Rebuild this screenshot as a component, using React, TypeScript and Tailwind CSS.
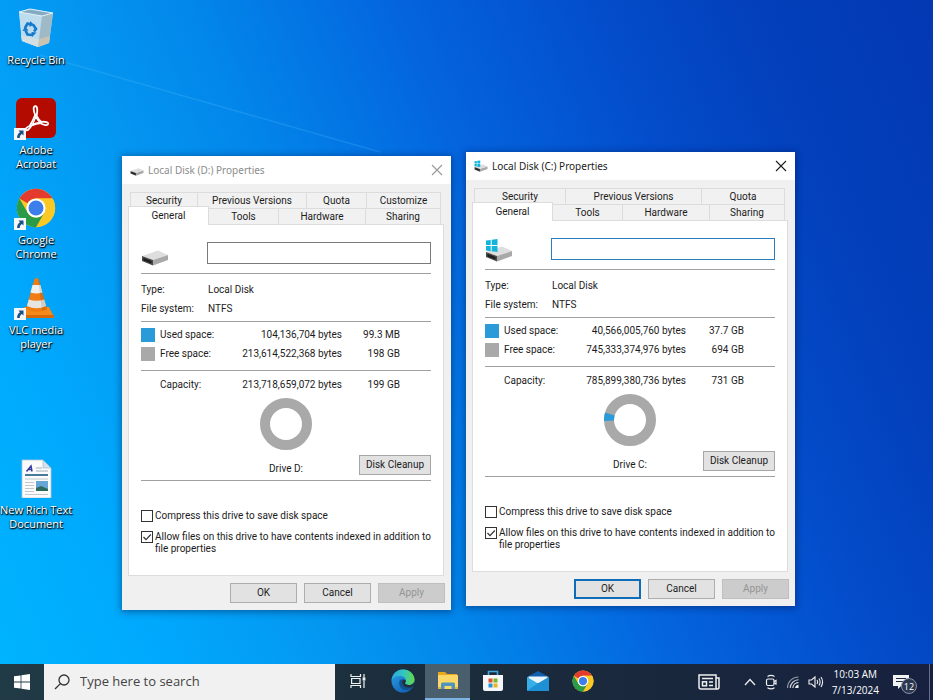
import { useState, type ReactNode } from 'react';

type Tab = { name: string; width: string };

type Drive = {
    letter: string;
    used: string;
    usedShort: string;
    free: string;
    freeShort: string;
    capacity: string;
    capacityShort: string;
    ratio: number;
    backTabs: Tab[];
    active: boolean;
};

const drives: Drive[] = [
    {
        letter: 'D',
        used: '104,136,704 bytes',
        usedShort: '99.3 MB',
        free: '213,614,522,368 bytes',
        freeShort: '198 GB',
        capacity: '213,718,659,072 bytes',
        capacityShort: '199 GB',
        ratio: 0,
        backTabs: [
            { name: 'Security', width: 'w-[67px]' },
            { name: 'Previous Versions', width: 'w-[109px]' },
            { name: 'Quota', width: 'w-[60px]' },
            { name: 'Customize', width: 'flex-1' },
        ],
        active: false,
    },
    {
        letter: 'C',
        used: '40,566,005,760 bytes',
        usedShort: '37.7 GB',
        free: '745,333,374,976 bytes',
        freeShort: '694 GB',
        capacity: '785,899,380,736 bytes',
        capacityShort: '731 GB',
        ratio: 0.052,
        backTabs: [
            { name: 'Security', width: 'w-[91px]' },
            { name: 'Previous Versions', width: 'w-[136px]' },
            { name: 'Quota', width: 'flex-1' },
        ],
        active: true,
    },
];

const frontTabs: Tab[] = [
    { name: 'Tools', width: 'w-[70px]' },
    { name: 'Hardware', width: 'w-[87px]' },
    { name: 'Sharing', width: 'flex-1' },
];

/* ---------- icons ---------- */

function ChromeIcon({ className }: { className?: string }) {
    return (
        <svg viewBox="0 0 48 48" className={className} aria-hidden="true">
            <circle cx="24" cy="24" r="23" fill="#fbc926" />
            <path d="M4.1 12.5A23 23 0 0 1 43.9 12.5H24A11.5 11.5 0 0 0 14 18.3Z" fill="#e33b2e" />
            <path d="M43.9 12.5H24L34 29.8 24 47A23 23 0 0 0 43.9 12.5Z" fill="#fbc926" />
            <path d="M4.1 12.5 14 29.8A11.5 11.5 0 0 0 34 29.8L24 47A23 23 0 0 1 4.1 12.5Z" fill="#2a9c48" />
            <circle cx="24" cy="24" r="11.5" fill="#fff" />
            <circle cx="24" cy="24" r="9" fill="#3c7fea" />
        </svg>
    );
}

function RecycleBinIcon() {
    return (
        <svg viewBox="0 0 40 40" className="size-10" aria-hidden="true">
            <path d="M3 4 14 1 37 5 33 35 22 39 6 33Z" fill="#b9d8ea" />
            <path d="M3 4 26 8 22 39 6 33Z" fill="#bddcee" />
            <path d="M26 8 37 5 33 35 22 39Z" fill="#9fb9c6" />
            <path d="M5 27 23 32 22 39 6 33Z" fill="#d3dfe2" />
            <path d="M23 31 34 28 33 35 22 39Z" fill="#c9c3b4" />
            <path d="M3 4 14 1 37 5 26 8Z" fill="#84abc2" stroke="#e4f1f8" strokeWidth="1" />
            <g fill="none" stroke="#1379cd" strokeWidth="2.6">
                <path d="M9 20 11.5 15.5 15 16.5" />
                <path d="M17 16.5 20 21 18 23.5" />
                <path d="M17 27 11.5 26.5 9.5 22.5" />
            </g>
            <path d="M14 13 18 16.5 13.5 19ZM20.5 24.5 16 29 15.5 24ZM6.5 23 9 18.5 12.5 22.5Z" fill="#1379cd" />
        </svg>
    );
}

function AcrobatIcon() {
    return (
        <svg viewBox="0 0 40 40" className="size-10" aria-hidden="true">
            <rect width="40" height="40" rx="6" fill="#b30b00" />
            <path
                d="M19.4 8.2c-2.6 0-2 4.6-.2 8.6-1.5 4.2-3.6 8.3-5.6 11.2-2.6 1-4.4 2.6-3.8 3.9.9 1.6 3.6-.5 5.9-4.5 3-1.1 6.1-1.9 8.9-2.2 3.5 2.1 7 2.5 7.5.9.5-1.8-2.7-2.7-6.7-2.2-2-1.4-3.6-3.5-4.8-6.3.9-3.6 1.2-9.4-1.2-9.4Z"
                fill="none"
                stroke="#fff"
                strokeWidth="1.8"
                strokeLinejoin="round"
            />
            <path d="M19.7 18.5c1 2.4 2.4 4.4 4.2 5.9-2.5.4-4.9 1-7.3 1.9 1.2-2.4 2.2-5 3.1-7.8Z" fill="#b30b00" stroke="#fff" strokeWidth="1.3" />
        </svg>
    );
}

function VlcIcon() {
    return (
        <svg viewBox="0 0 40 40" className="size-10" aria-hidden="true">
            <path d="M8 29H33L38 39Q38 40 37 40H4Q2 40 3 38Z" fill="#f38a1b" />
            <path d="M2 37H38V39L37 40H4L2 39Z" fill="#d7690a" />
            <path d="M18.5 1Q20.5-1 22.5 1L31 31Q21 37 10 31Z" fill="#f07c13" />
            <path d="M16.5 7H24.4L26.4 14.5Q20.5 16.5 14.5 14.5Z" fill="#efefed" />
            <path d="M12.8 21.5Q20.5 24 28.2 21.5L30.2 28Q20.5 32.5 10.9 28Z" fill="#e6e5e2" />
            <path d="M22 1 26 33Q29 32.5 31 31L22.5 1Z" fill="#000" opacity=".1" />
        </svg>
    );
}

function RichTextIcon() {
    return (
        <svg viewBox="0 0 40 40" className="size-10" aria-hidden="true">
            <path d="M6 2H27L35 10V40H6Z" fill="#fbfbfb" stroke="#b9c6cf" strokeWidth=".8" />
            <path d="M27 2V10H35Z" fill="#d3e2ec" stroke="#9fb4c2" strokeWidth=".6" />
            <path d="M10.5 13.5 15 8 16 13.5M12.5 11.5H16" fill="none" stroke="#383a9c" strokeWidth="1.5" />
            <path d="M20 10H26M20 13H32" stroke="#9fb1bf" />
            <path d="M9 17H32" stroke="#1c5b86" strokeWidth="1.6" />
            <path d="M9 21H32M9 24.5H18M9 27.5H18M9 30.5H18M9 33.5H18M9 36.5H32" stroke="#c3c8cc" />
            <rect x="20" y="23" width="12" height="10" fill="#65a6d6" />
            <path d="M20 30 25 28 32 31V33H20Z" fill="#2e6a5c" />
        </svg>
    );
}

function ShortcutArrow() {
    return (
        <svg viewBox="0 0 12 12" className="absolute -bottom-0.5 -left-0.5 size-3" aria-hidden="true">
            <rect width="12" height="12" fill="#f4f8fb" />
            <path d="M4.5 2.5H9.5V7.5L7.9 6C6.4 7 5.6 8.3 5.8 10H3.2C2.9 7.5 4 5.5 6 4.2Z" fill="#1d4e86" />
        </svg>
    );
}

function DiskIcon({ system, className }: { system: boolean; className?: string }) {
    return (
        <svg viewBox="0 0 28 24" className={className} aria-hidden="true">
            <path d="M1 14 17 8.5 27 13 12 18Z" fill="#dedede" />
            <path d="M12 18 27 13V18L12 23.5Z" fill="#a9a9a9" />
            <path d="M1 14 12 18V23.5L1 19Z" fill="#4a4a4a" />
            <path d="M2.5 16 10.5 19V21.5L2.5 18.5Z" fill="#1e1e1e" />
            {system && (
                <path
                    d="M1 2.5 5.7 1.9V7H1ZM6.7 1.7 12.5 1V7H6.7ZM1 8H5.7V13.2L1 12.6ZM6.7 8H12.5V14L6.7 13.3Z"
                    fill="#12b4dc"
                />
            )}
        </svg>
    );
}

function WindowsLogo() {
    return (
        <svg viewBox="0 0 16 16" className="size-4" fill="#fff" aria-hidden="true">
            <path d="M0 2.3 6.6 1.4V7.6H0ZM7.4 1.2 16 0V7.6H7.4ZM0 8.4H6.6V14.6L0 13.7ZM7.4 8.4H16V16L7.4 14.8Z" />
        </svg>
    );
}

function TaskViewIcon() {
    return (
        <svg viewBox="0 0 16 16" className="size-4" fill="none" stroke="#f2f2f2" strokeWidth="1.2" aria-hidden="true">
            <path d="M1 1V3.5H10.5V1M1 15V12.5H10.5V15M1.6 5.5H10V10.5H1.6ZM14 1V4.5M14 8V15" />
            <rect x="13.2" y="5" width="1.6" height="2" fill="#f2f2f2" />
        </svg>
    );
}

function EdgeIcon() {
    return (
        <svg viewBox="0 0 24 24" className="size-6" aria-hidden="true">
            <defs>
                <linearGradient id="edge-top" x1="0" y1="0.4" x2="1" y2="0.5">
                    <stop offset="0" stopColor="#2aa8e0" />
                    <stop offset="0.5" stopColor="#32c6c0" />
                    <stop offset="1" stopColor="#63d84c" />
                </linearGradient>
                <linearGradient id="edge-low" x1="0" y1="0" x2="0.6" y2="1">
                    <stop offset="0" stopColor="#2aa4ea" />
                    <stop offset="1" stopColor="#1464b8" />
                </linearGradient>
            </defs>
            <circle cx="12" cy="12" r="11.5" fill="url(#edge-low)" />
            <path d="M.6 11.5C1.2 5 6 .5 12 .5c6.5 0 11.5 4.7 11.5 10 0 3.3-2.5 5.5-5.7 5.5-2.3 0-3.8-.9-3.8-1.9 0-.7.9-1 .9-2.6 0-2.2-2.2-4.5-5.6-4.5C5 7 1.5 8.9.6 11.5Z" fill="url(#edge-top)" />
            <path d="M8.9 11.2c-2 3.5.4 9.6 6.1 9.8 2.6.1 5-.8 6.4-2l.7-.6c.3-.3.1-.7-.3-.5-1 .5-2.4.8-3.7.8-4 0-7-2.6-7-5.3 0-1.3.7-2.3 1.8-2.9-1.7-.7-3.2-.3-4 .7Z" fill="#12508f" />
            <path d="M14 14.1c0 1 1.5 1.9 3.8 1.9 2.3 0 4-1 5-2.6.4 1.6-.1 3.5-1 4.6-1 .5-2.4.8-3.7.8-4 0-7-2.6-7-5.3 0-1.3.7-2.4 1.8-2.9 1.3.2 2 1 2 1.6 0 1.1-.9 1.2-.9 1.9Z" fill="#1e303e" />
        </svg>
    );
}

function ExplorerIcon() {
    return (
        <svg viewBox="0 0 22 20" className="h-5 w-[22px]" aria-hidden="true">
            <path d="M1 1H8L10 3H20V6H1Z" fill="#e9a81c" />
            <rect x="1" y="4" width="20" height="14" rx=".5" fill="#fbd768" />
            <path d="M4 18V13Q4 11.5 5.5 11.5H16.5Q18 11.5 18 13V18H14.5V15H7.5V18Z" fill="#4f94bb" />
            <path d="M1 16H4V18H1ZM18 16H21V18H18Z" fill="#e3b743" />
        </svg>
    );
}

function StoreIcon() {
    return (
        <svg viewBox="0 0 22 22" className="size-[22px]" aria-hidden="true">
            <path d="M6.5 6V1.5H15.5V6" fill="none" stroke="#41a5e0" strokeWidth="1.6" />
            <path d="M1 5H21V19Q21 21 19 21H3Q1 21 1 19Z" fill="#f5f6f7" />
            <rect x="6.5" y="8.5" width="4" height="4" fill="#e2502b" />
            <rect x="11.5" y="8.5" width="4" height="4" fill="#74b62c" />
            <rect x="6.5" y="13.5" width="4" height="4" fill="#2494d8" />
            <rect x="11.5" y="13.5" width="4" height="4" fill="#f3b21c" />
        </svg>
    );
}

function MailIcon() {
    return (
        <svg viewBox="0 0 22 20" className="h-5 w-[22px]" aria-hidden="true">
            <path d="M0 6 11 0 22 6V12H0Z" fill="#0f5fae" />
            <path d="M1.5 5.5H20.5V12H1.5Z" fill="#eaf5fc" />
            <path d="M0 6 11 12.5 22 6V19Q22 20 21 20H1Q0 20 0 19Z" fill="#37aee8" />
            <path d="M0 19.5 13 11.3 22 6V19Q22 20 21 20H1Z" fill="#1f8fd6" />
        </svg>
    );
}

function NewsIcon() {
    return (
        <svg viewBox="0 0 22 16" className="h-4 w-[22px]" fill="none" stroke="#eee" strokeWidth="1.5" aria-hidden="true">
            <path d="M1 1H18V13Q18 15 19.5 15H3Q1 15 1 13ZM18 4H21V13Q21 15 19.5 15" />
            <path d="M4 4.5H15M11 8H15M11 11.5H15" />
            <rect x="4.5" y="7.8" width="4" height="4" />
        </svg>
    );
}

function MeetNowIcon() {
    return (
        <svg viewBox="0 0 14 16" className="h-4 w-3.5" fill="none" stroke="#eee" strokeWidth="1.2" aria-hidden="true">
            <rect x="2.5" y="5" width="7.5" height="6.5" rx="1.5" />
            <path d="M10 7.5 12 6.5V10L10 9M3.5 2.5Q7 .3 10.5 2.5M3.5 13.7Q7 15.9 10.5 13.7" />
        </svg>
    );
}

function WifiIcon() {
    return (
        <svg viewBox="0 0 14 14" className="size-3.5" fill="none" aria-hidden="true">
            <g stroke="#8d96a4" strokeWidth="1.1">
                <path d="M1.5 13A11 11 0 0 1 12.5 2" />
                <path d="M4.2 13A8.5 8.5 0 0 1 12.5 4.8" stroke="#cfd3d9" />
                <path d="M6.8 13A6 6 0 0 1 12.5 7.5" stroke="#e6e8eb" />
            </g>
            <path d="M9 13A4 4 0 0 1 12.5 9.8V13Z" fill="#eee" />
        </svg>
    );
}

function VolumeIcon() {
    return (
        <svg viewBox="0 0 16 14" className="h-3.5 w-4" fill="none" stroke="#eee" strokeWidth="1.1" aria-hidden="true">
            <path d="M1 5H3.5L7 2V12L3.5 9H1ZM9 5Q10.2 7 9 9M11 3.5Q13.2 7 11 10.5M13 2Q16.2 7 13 12" />
        </svg>
    );
}

/* ---------- properties window ---------- */

function UsageRing({ ratio }: { ratio: number }) {
    const length = 2 * Math.PI * 21;
    return (
        <svg viewBox="0 0 52 52" className="size-[52px]" aria-hidden="true">
            <circle cx="26" cy="26" r="21" fill="none" stroke="#a9a9a9" strokeWidth="10" />
            {ratio > 0 && (
                <circle
                    cx="26"
                    cy="26"
                    r="21"
                    fill="none"
                    stroke="#2a9bd8"
                    strokeWidth="10"
                    strokeDasharray={`${length * ratio} ${length}`}
                    transform="rotate(178 26 26)"
                />
            )}
        </svg>
    );
}

function TabButton({ tab }: { tab: Tab }) {
    return (
        <button
            type="button"
            role="tab"
            aria-selected="false"
            className={`${tab.width} border-t border-r border-[#dcdcdc] bg-[#f1f1f1] text-center leading-4`}
        >
            {tab.name}
        </button>
    );
}

function Check({ label, defaultOn }: { label: string; defaultOn: boolean }) {
    const [on, setOn] = useState(defaultOn);
    return (
        <label className="flex items-start gap-0.5 leading-3">
            <span className="relative size-3 shrink-0">
                <input
                    type="checkbox"
                    checked={on}
                    onChange={(e) => setOn(e.target.checked)}
                    className="block size-3 appearance-none border border-[#333] bg-white"
                />
                {on && (
                    <svg viewBox="0 0 12 12" className="pointer-events-none absolute inset-0 size-3" aria-hidden="true">
                        <path d="M2.5 6 5 8.7 9.8 3.5" fill="none" stroke="#333" strokeWidth="1.2" />
                    </svg>
                )}
            </span>
            <span>{label}</span>
        </label>
    );
}

function PropertiesWindow({ drive, position }: { drive: Drive; position: string }) {
    const title = `Local Disk (${drive.letter}:) Properties`;
    const button = 'h-5 w-[67px] border text-center leading-4';

    return (
        <section
            aria-label={title}
            className={`absolute ${position} w-[329px] bg-[#f0f0f0] text-[10px] text-[#1c1c1c] font-[Roboto,sans-serif] shadow-[0_1px_7px_1px_rgba(0,20,70,0.45)]`}
        >
            <header className="flex h-7 items-center gap-1 bg-white pr-2 pl-2">
                <DiskIcon system={drive.active} className="h-3 w-3.5" />
                <h2 className={`flex-1 font-['Noto_Sans',sans-serif] text-[10px] ${drive.active ? 'text-[#1c1c1c]' : 'text-[#8c8c8c]'}`}>
                    {title}
                </h2>
                <button type="button" aria-label="Close" className={drive.active ? 'text-[#1c1c1c]' : 'text-[#999]'}>
                    <svg viewBox="0 0 12 12" className="size-3" stroke="currentColor" strokeWidth="1.1" aria-hidden="true">
                        <path d="M1 1 11 11M11 1 1 11" />
                    </svg>
                </button>
            </header>

            <div className="px-1.5 pt-2 pb-[7px]">
                <div role="tablist" className="px-0.5">
                    <div className="mr-0.5 flex h-4 border-l border-[#dcdcdc]">
                        {drive.backTabs.map((tab) => (
                            <TabButton key={tab.name} tab={tab} />
                        ))}
                    </div>
                    <div className="mr-0.5 flex h-4">
                        <button
                            type="button"
                            role="tab"
                            aria-selected="true"
                            className="relative -mt-0.5 -mb-px -ml-0.5 w-[81px] border-t border-r border-l border-[#dcdcdc] bg-white text-center leading-4"
                        >
                            General
                        </button>
                        {frontTabs.map((tab) => (
                            <TabButton key={tab.name} tab={tab} />
                        ))}
                    </div>
                </div>

                {/* General tab */}
                <div role="tabpanel" className="mr-px border border-[#dcdcdc] bg-white px-3 pt-[17px] pb-5">
                    <div className="flex items-start justify-between border-b border-[#a0a0a0] pb-[7px]">
                        <DiskIcon system={drive.active} className="h-6 w-7" />
                        <input
                            type="text"
                            aria-label="Volume label"
                            className={`h-[22px] w-56 border bg-white px-1 outline-none ${drive.active ? 'border-[#2b7cb8]' : 'border-[#7a7a7a]'}`}
                        />
                    </div>

                    <dl className="grid grid-cols-[67px_1fr] border-b border-[#a0a0a0] pt-1.5 pb-[3px] leading-[19px]">
                        <dt>Type:</dt>
                        <dd>Local Disk</dd>
                        <dt>File system:</dt>
                        <dd>NTFS</dd>
                    </dl>

                    <table className="mt-[3px] w-full border-collapse text-right leading-[19px]">
                        <tbody>
                            <tr>
                                <td className="w-[19px]">
                                    <span className="block size-3.5 bg-[#2a9bd8]" />
                                </td>
                                <th className="text-left font-normal">Used space:</th>
                                <td className="w-[110px]">{drive.used}</td>
                                <td className="w-[89px] pr-[31px]">{drive.usedShort}</td>
                            </tr>
                            <tr>
                                <td className="pt-[3px] pb-[7px] align-top">
                                    <span className="block size-3.5 bg-[#a9a9a9]" />
                                </td>
                                <th className="pb-[7px] text-left font-normal">Free space:</th>
                                <td className="pb-[7px]">{drive.free}</td>
                                <td className="pr-[31px] pb-[7px]">{drive.freeShort}</td>
                            </tr>
                        </tbody>
                        <tfoot>
                            <tr className="border-t border-[#a0a0a0]">
                                <td />
                                <th className="pt-1 text-left font-normal">Capacity:</th>
                                <td className="pt-1">{drive.capacity}</td>
                                <td className="pt-1 pr-[31px]">{drive.capacityShort}</td>
                            </tr>
                        </tfoot>
                    </table>

                    <div className="grid grid-cols-[1fr_72px] items-end border-b border-[#a0a0a0] pt-1 pb-[5px]">
                        <div className="flex flex-col items-center pl-[72px]">
                            <UsageRing ratio={drive.ratio} />
                            <span className="mt-[13px] leading-3">Drive {drive.letter}:</span>
                        </div>
                        <button type="button" className="h-5 border border-[#a6a6a6] bg-[#e2e2e2] text-center leading-4">
                            Disk Cleanup
                        </button>
                    </div>

                    <div className="flex flex-col gap-[9px] pt-[29px]">
                        <Check label="Compress this drive to save disk space" defaultOn={false} />
                        <Check
                            label="Allow files on this drive to have contents indexed in addition to file properties"
                            defaultOn={true}
                        />
                    </div>
                </div>

                <div className="flex justify-end gap-[7px] pt-[7px]">
                    <button
                        type="button"
                        className={`${button} bg-[#e2e2e2] ${drive.active ? 'border-[#0f6cb8] inset-ring inset-ring-[#0f6cb8]' : 'border-[#adadad]'}`}
                    >
                        OK
                    </button>
                    <button type="button" className={`${button} border-[#adadad] bg-[#e2e2e2]`}>
                        Cancel
                    </button>
                    <button type="button" disabled className={`${button} border-[#bfbfbf] bg-[#cccccc] text-[#949494]`}>
                        Apply
                    </button>
                </div>
            </div>
        </section>
    );
}

/* ---------- desktop ---------- */

function DesktopIcon({ label, shortcut, row, children }: { label: string; shortcut?: boolean; row?: string; children: ReactNode }) {
    return (
        <button type="button" className={`flex flex-col items-center pt-2 ${row ?? ''}`}>
            <span className="relative mb-[5px] block">
                {children}
                {shortcut && <ShortcutArrow />}
            </span>
            <span className="text-center font-['Open_Sans',sans-serif] text-[11px] leading-[14px] whitespace-pre text-white [text-shadow:0_1px_2px_#000,1px_1px_1px_#000]">
                {label}
            </span>
        </button>
    );
}

function TaskButton({ label, active, children }: { label: string; active?: boolean; children: ReactNode }) {
    return (
        <button
            type="button"
            aria-label={label}
            className={`flex w-[45px] items-center justify-center border-b-2 ${active ? 'border-[#7db4e6] bg-[#4a5f6d]' : 'border-transparent'}`}
        >
            {children}
        </button>
    );
}

function Taskbar() {
    return (
        <footer className="flex h-9 bg-linear-to-r from-[#203a46] via-[#1b2c3b] to-[#17213f] font-['Open_Sans',sans-serif] text-white">
            <button type="button" aria-label="Start" className="flex w-11 items-center justify-center">
                <WindowsLogo />
            </button>
            <label className="flex w-[291px] items-center gap-2.5 bg-[#f1f1f1] pl-2.5 text-[#333]">
                <svg viewBox="0 0 16 16" className="size-4" fill="none" stroke="#333" strokeWidth="1.3" aria-hidden="true">
                    <circle cx="10" cy="6" r="5" />
                    <path d="M6.4 9.6 1 15" />
                </svg>
                <input
                    type="text"
                    aria-label="Search"
                    placeholder="Type here to search"
                    className="min-w-0 flex-1 bg-transparent text-[13px] outline-none placeholder:text-[#444]"
                />
            </label>
            <nav className="flex flex-1" aria-label="Pinned apps">
                <TaskButton label="Task view">
                    <TaskViewIcon />
                </TaskButton>
                <TaskButton label="Edge">
                    <EdgeIcon />
                </TaskButton>
                <TaskButton label="File Explorer" active>
                    <ExplorerIcon />
                </TaskButton>
                <TaskButton label="Store">
                    <StoreIcon />
                </TaskButton>
                <TaskButton label="Mail">
                    <MailIcon />
                </TaskButton>
                <TaskButton label="Chrome">
                    <ChromeIcon className="size-[22px]" />
                </TaskButton>
            </nav>

            {/* Tray */}
            <div className="flex items-center gap-2">
                <button type="button" aria-label="News" className="mr-4">
                    <NewsIcon />
                </button>
                <button type="button" aria-label="Show hidden icons">
                    <svg viewBox="0 0 12 8" className="h-2 w-3" fill="none" stroke="#eee" strokeWidth="1.3" aria-hidden="true">
                        <path d="M1 7 6 1.5 11 7" />
                    </svg>
                </button>
                <button type="button" aria-label="Meet now">
                    <MeetNowIcon />
                </button>
                <button type="button" aria-label="Network">
                    <WifiIcon />
                </button>
                <button type="button" aria-label="Volume">
                    <VolumeIcon />
                </button>
                <button type="button" className="text-center text-[10px] leading-4">
                    10:03 AM
                    <br />
                    7/13/2024
                </button>
                <button type="button" aria-label="12 notifications" className="relative ml-1.5 h-6 w-7">
                    <svg viewBox="0 0 16 14" className="h-3.5 w-4" aria-hidden="true">
                        <path d="M0 0H16V11H8L5 14V11H0Z" fill="#f2f2f2" />
                        <path d="M3 3.5H13M3 6.5H13" stroke="#1b2440" strokeWidth="1.2" />
                    </svg>
                    <span className="absolute right-1 bottom-0 flex size-4 items-center justify-center rounded-full border border-[#8a93a5] bg-[#2b3650] text-[9px] leading-none">
                        12
                    </span>
                </button>
                <span className="h-full w-1 border-l border-[#66708a]" />
            </div>
        </footer>
    );
}

export default function App() {
    return (
        <div className="flex min-h-screen flex-col overflow-hidden bg-[#0040bc]">
            <main className="relative flex-1 bg-[linear-gradient(67deg,#00b4ff_0%,#00a8fc_14%,#0498f1_27%,#0286ea_39%,#0464de_56%,#034dcb_72%,#0340bc_84%,#0338b2_100%)]">
                {/* light beam of the wallpaper */}
                <svg viewBox="0 0 933 664" preserveAspectRatio="none" className="absolute inset-0 size-full" aria-hidden="true">
                    <path d="M40 55 380 152" stroke="#5cc4ff" strokeOpacity=".22" strokeWidth="1.5" />
                </svg>

                <div className="relative grid w-[71px] auto-rows-[90px]">
                    <DesktopIcon label="Recycle Bin">
                        <RecycleBinIcon />
                    </DesktopIcon>
                    <DesktopIcon label={'Adobe\nAcrobat'} shortcut>
                        <AcrobatIcon />
                    </DesktopIcon>
                    <DesktopIcon label={'Google\nChrome'} shortcut>
                        <ChromeIcon className="size-10" />
                    </DesktopIcon>
                    <DesktopIcon label={'VLC media\nplayer'} shortcut>
                        <VlcIcon />
                    </DesktopIcon>
                    <DesktopIcon label={'New Rich Text\nDocument'} row="row-start-6">
                        <RichTextIcon />
                    </DesktopIcon>
                </div>

                <PropertiesWindow drive={drives[0]} position="top-[156px] left-[122px]" />
                <PropertiesWindow drive={drives[1]} position="top-[152px] left-[466px]" />
            </main>
            <Taskbar />
        </div>
    );
}
